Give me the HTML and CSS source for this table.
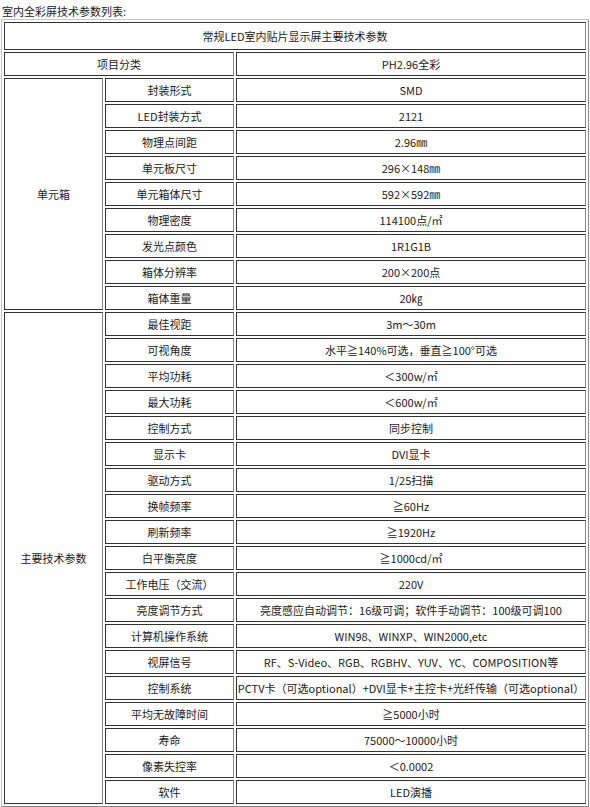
FILE: index.html
```html
<!DOCTYPE html>
<html lang="zh-CN">
<head>
<meta charset="utf-8">
<title>室内全彩屏技术参数列表</title>
<link rel="stylesheet" href="styles.css">
</head>
<body>
<div class="caption">室内全彩屏技术参数列表:</div>
<table class="spec">
<colgroup>
<col class="c1"><col class="c2"><col class="c3">
</colgroup>
<tbody>
<tr class="head"><td colspan="3">常规LED室内贴片显示屏主要技术参数</td></tr>
<tr><td colspan="2">项目分类</td><td>PH2.96全彩</td></tr>
<tr><td rowspan="9">单元箱</td><td>封装形式</td><td>SMD</td></tr>
<tr><td>LED封装方式</td><td>2121</td></tr>
<tr><td>物理点间距</td><td>2.96㎜</td></tr>
<tr><td>单元板尺寸</td><td>296×148㎜</td></tr>
<tr><td>单元箱体尺寸</td><td>592×592㎜</td></tr>
<tr><td>物理密度</td><td>114100点/㎡</td></tr>
<tr><td>发光点颜色</td><td>1R1G1B</td></tr>
<tr><td>箱体分辨率</td><td>200×200点</td></tr>
<tr><td>箱体重量</td><td>20㎏</td></tr>
<tr><td rowspan="19">主要技术参数</td><td>最佳视距</td><td>3m～30m</td></tr>
<tr><td>可视角度</td><td>水平≧140%可选，垂直≧100°可选</td></tr>
<tr><td>平均功耗</td><td>＜300w/㎡</td></tr>
<tr><td>最大功耗</td><td>＜600w/㎡</td></tr>
<tr><td>控制方式</td><td>同步控制</td></tr>
<tr><td>显示卡</td><td>DVI显卡</td></tr>
<tr><td>驱动方式</td><td>1/25扫描</td></tr>
<tr><td>换帧频率</td><td>≧60Hz</td></tr>
<tr><td>刷新频率</td><td>≧1920Hz</td></tr>
<tr><td>白平衡亮度</td><td>≧1000cd/㎡</td></tr>
<tr><td>工作电压（交流）</td><td>220V</td></tr>
<tr><td>亮度调节方式</td><td>亮度感应自动调节：16级可调；软件手动调节：100级可调100</td></tr>
<tr><td>计算机操作系统</td><td>WIN98、WINXP、WIN2000,etc</td></tr>
<tr><td>视屏信号</td><td>RF、S-Video、RGB、RGBHV、YUV、YC、COMPOSITION等</td></tr>
<tr><td>控制系统</td><td>PCTV卡（可选optional）+DVI显卡+主控卡+光纤传输（可选optional）</td></tr>
<tr><td>平均无故障时间</td><td>≧5000小时</td></tr>
<tr><td>寿命</td><td>75000～10000小时</td></tr>
<tr><td>像素失控率</td><td>＜0.0002</td></tr>
<tr><td>软件</td><td>LED演播</td></tr>
</tbody>
</table>
</body>
</html>
```

FILE: styles.css
```css
html, body {
  margin: 0;
  padding: 0;
  background: #fff;
}
body {
  padding: 0 0 0 1px;
  font-family: "Noto Sans CJK SC", sans-serif;
  font-size: 11px;
  color: #1a1a1a;
}
.caption {
  height: 16px;
  padding: 3px 0 0 1px;
  line-height: 16px;
}
.spec {
  width: 588px;
  table-layout: fixed;
  border-collapse: separate;
  border-spacing: 2px;
  border: 1px solid;
  border-color: #c8c8c8 #8a8a8a #8a8a8a #c8c8c8;
}
.c1 { width: 99px; }
.c2 { width: 129px; }
.spec td {
  height: 22px;
  padding: 0;
  border: 1px solid;
  border-color: #333 #888 #333 #333;
  text-align: center;
  vertical-align: middle;
  white-space: nowrap;
  overflow: hidden;
  line-height: 14px;
}
.spec tr.head td {
  height: 26px;
}
```
